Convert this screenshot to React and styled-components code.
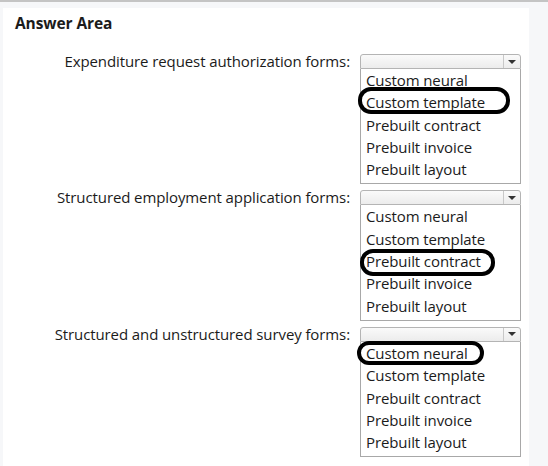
import styled, { createGlobalStyle } from 'styled-components'

const GlobalStyle = createGlobalStyle`
  html, body { margin: 0; padding: 0; }
  body {
    background: #f6f7f9;
    font-family: "Open Sans", "Noto Sans", sans-serif;
    color: #1b1b1b;
  }
`

const Page = styled.div`
  border-top: 2px solid #c4c4c4;
  padding: 6px 19px 0 3px;
  height: 458px;
`

const Panel = styled.div`
  background: #fff;
  height: 100%;
  padding: 5px 8px 0 12px;
  box-sizing: border-box;
`

const Title = styled.h2`
  margin: 0;
  font-size: 15.5px;
  font-weight: 700;
  line-height: 20px;
  letter-spacing: -0.1px;
`

const Rows = styled.div`
  display: grid;
  grid-template-columns: 1fr 161px;
  column-gap: 10px;
  row-gap: 6px;
  margin-top: 21px;
`

const Label = styled.div`
  text-align: right;
  font-size: 15px;
  line-height: 14px;
  letter-spacing: -0.1px;
`

const Control = styled.div`
  display: flex;
  flex-direction: column;
`

const Select = styled.div`
  height: 15px;
  border: 1px solid #b4b4b4;
  border-radius: 3px 3px 0 0;
  background: linear-gradient(#fafafa, #ececec);
  display: flex;
  justify-content: flex-end;
  box-sizing: border-box;
`

const Arrow = styled.div`
  width: 16px;
  border-left: 1px solid #c8c8c8;
  display: flex;
  align-items: center;
  justify-content: center;
  &::after {
    content: '';
    border-left: 4px solid transparent;
    border-right: 4px solid transparent;
    border-top: 4px solid #333;
  }
`

const List = styled.ul`
  list-style: none;
  margin: 0;
  padding: 1px 0 2px;
  border: 1px solid #a8a8a8;
  border-top: none;
  background: #fff;
  position: relative;
`

const Item = styled.li`
  position: relative;
  height: 22.3px;
  line-height: 20.5px;
  padding-left: 5px;
  font-size: 15px;
  letter-spacing: -0.1px;
  white-space: nowrap;
`

const Mark = styled.span`
  position: absolute;
  top: ${p => p.$top}px;
  left: ${p => p.$left}px;
  width: ${p => p.$w}px;
  height: ${p => p.$h}px;
  border: 4px solid #000;
  border-radius: 13px;
  box-sizing: border-box;
  pointer-events: none;
`

const options = ['Custom neural', 'Custom template', 'Prebuilt contract', 'Prebuilt invoice', 'Prebuilt layout']

const questions = [
  { label: 'Expenditure request authorization forms:', pick: 1, mark: { top: -5, left: -3, w: 152, h: 27 } },
  { label: 'Structured employment application forms:', pick: 2, mark: { top: -2, left: -1, w: 135, h: 27 } },
  { label: 'Structured and unstructured survey forms:', pick: 0, mark: { top: -2, left: -4, w: 127, h: 24 } },
]

export default function App() {
  return (
    <>
      <GlobalStyle />
      <Page>
        <Panel>
          <Title>Answer Area</Title>
          <Rows>
            {questions.map(q => [
              <Label key={q.label + 'l'}>{q.label}</Label>,
              <Control key={q.label + 'c'}>
                <Select><Arrow /></Select>
                <List>
                  {options.map((o, i) => (
                    <Item key={o}>
                      {o}
                      {i === q.pick && <Mark $top={q.mark.top} $left={q.mark.left} $w={q.mark.w} $h={q.mark.h} />}
                    </Item>
                  ))}
                </List>
              </Control>,
            ])}
          </Rows>
        </Panel>
      </Page>
    </>
  )
}
